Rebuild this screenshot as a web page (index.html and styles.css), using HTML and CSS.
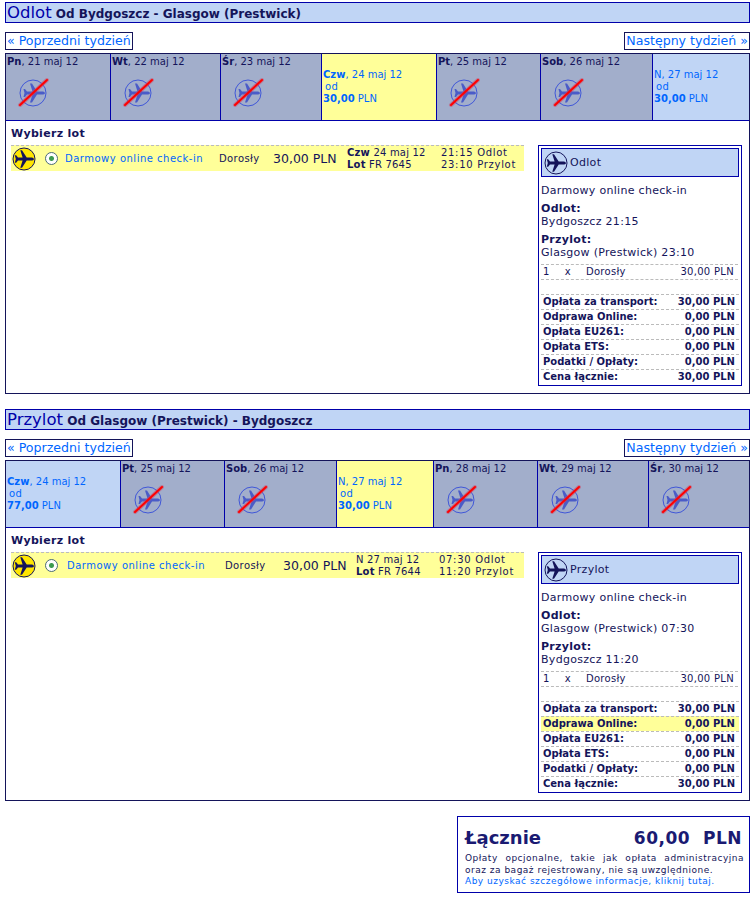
FILE: index.html
```html
<!DOCTYPE html>
<html lang="pl">
  <head>
    <meta charset="UTF-8" />
    <title>Wybierz lot</title>
    <link rel="stylesheet" href="styles.css">
  </head>
  <body>
    <svg class="defs" width="0" height="0">
      <symbol id="plane" viewBox="0 0 24 24">
        <path d="M22 12c0-1-1.500-1.600-3-1.600h-4.300L10 3.200H8.300l2.300 7.200H6L4.200 8.300H2.800l1 3.700-1 3.700h1.400L6 13.600h4.600l-2.300 7.200H10l4.700-7.200H19c1.500 0 3-.6 3-1.600z" />
      </symbol>
      <symbol id="noflight" viewBox="0 0 32 32">
        <circle cx="16" cy="16" r="13" fill="none" stroke="#4057d8" stroke-width="1" />
        <path fill="#4a5cc8" d="M28 16c0-1-1.500-1.600-3-1.600h-5l-5-8h-2l2.500 8H10L8 12H6.500l1 4-1 4H8l2-2.400h5.500l-2.500 8h2l5-8h5c1.500 0 3-.6 3-1.600z" />
        <path class="noflight-glow" d="M3 28 30 3" />
        <path class="noflight-line" d="M3 28 30 3" />
      </symbol>
    </svg>

    <div class="section">
      <h2 class="title"><span class="title-big">Odlot</span> Od Bydgoszcz - Glasgow (Prestwick)</h2>
      <div class="week-nav">
        <a class="week-link">« Poprzedni tydzień</a>
        <a class="week-link">Następny tydzień »</a>
      </div>
      <div class="panel">
        <div class="week week-out">
          <div class="day day-off"><p><b>Pn</b>, 21 maj 12</p><svg class="noflight"><use href="#noflight" /></svg></div>
          <div class="day day-off"><p><b>Wt</b>, 22 maj 12</p><svg class="noflight"><use href="#noflight" /></svg></div>
          <div class="day day-off"><p><b>Śr</b>, 23 maj 12</p><svg class="noflight"><use href="#noflight" /></svg></div>
          <div class="day day-sel"><p><b>Czw</b>, 24 maj 12</p><p class="day-from">od</p><p><b>30,00</b> PLN</p></div>
          <div class="day day-off"><p><b>Pt</b>, 25 maj 12</p><svg class="noflight"><use href="#noflight" /></svg></div>
          <div class="day day-off"><p><b>Sob</b>, 26 maj 12</p><svg class="noflight"><use href="#noflight" /></svg></div>
          <div class="day day-free"><p>N, 27 maj 12</p><p class="day-from">od</p><p><b>30,00</b> PLN</p></div>
        </div>
        <div class="panel-body">
          <div class="flights">
            <h3 class="pick">Wybierz lot</h3>
            <div class="fare fare-out">
              <svg class="badge" viewBox="0 0 24 24"><circle cx="12" cy="12" r="11" fill="#ffe600" stroke="#14145a" stroke-width="1" /><use href="#plane" fill="#14145a" /></svg>
              <span class="radio"></span>
              <span class="fare-name">Darmowy online check-in</span>
              <span class="fare-pax">Dorosły</span>
              <span class="fare-price">30,00 PLN</span>
              <span class="fare-info"><b>Czw</b> 24 maj 12<br><b>Lot</b> FR 7645</span>
              <span class="fare-time">21:15 Odlot<br>23:10 Przylot</span>
            </div>
          </div>
          <div class="summary">
            <div class="summary-head"><svg class="badge" viewBox="0 0 24 24"><circle cx="12" cy="12" r="11" fill="none" stroke="#14145a" stroke-width="1" /><use href="#plane" fill="#14145a" /></svg>Odlot</div>
            <p class="summary-fare">Darmowy online check-in</p>
            <p class="summary-stop"><b>Odlot:</b><br>Bydgoszcz 21:15</p>
            <p class="summary-stop"><b>Przylot:</b><br>Glasgow (Prestwick) 23:10</p>
            <div class="pax"><span>1</span><span>x</span><span>Dorosły</span><span class="pax-price">30,00 PLN</span></div>
            <div class="costs">
              <div class="cost"><span>Opłata za transport:</span><span>30,00 PLN</span></div>
              <div class="cost"><span>Odprawa Online:</span><span>0,00 PLN</span></div>
              <div class="cost"><span>Opłata EU261:</span><span>0,00 PLN</span></div>
              <div class="cost"><span>Opłata ETS:</span><span>0,00 PLN</span></div>
              <div class="cost"><span>Podatki / Opłaty:</span><span>0,00 PLN</span></div>
              <div class="cost"><span>Cena łącznie:</span><span>30,00 PLN</span></div>
            </div>
          </div>
        </div>
      </div>
    </div>

    <div class="section">
      <h2 class="title"><span class="title-big">Przylot</span> Od Glasgow (Prestwick) - Bydgoszcz</h2>
      <div class="week-nav">
        <a class="week-link">« Poprzedni tydzień</a>
        <a class="week-link">Następny tydzień »</a>
      </div>
      <div class="panel">
        <div class="week week-back">
          <div class="day day-free"><p><b>Czw</b>, 24 maj 12</p><p class="day-from">od</p><p><b>77,00</b> PLN</p></div>
          <div class="day day-off"><p><b>Pt</b>, 25 maj 12</p><svg class="noflight"><use href="#noflight" /></svg></div>
          <div class="day day-off"><p><b>Sob</b>, 26 maj 12</p><svg class="noflight"><use href="#noflight" /></svg></div>
          <div class="day day-sel"><p>N, 27 maj 12</p><p class="day-from">od</p><p><b>30,00</b> PLN</p></div>
          <div class="day day-off"><p><b>Pn</b>, 28 maj 12</p><svg class="noflight"><use href="#noflight" /></svg></div>
          <div class="day day-off"><p><b>Wt</b>, 29 maj 12</p><svg class="noflight"><use href="#noflight" /></svg></div>
          <div class="day day-off"><p><b>Śr</b>, 30 maj 12</p><svg class="noflight"><use href="#noflight" /></svg></div>
        </div>
        <div class="panel-body">
          <div class="flights">
            <h3 class="pick">Wybierz lot</h3>
            <div class="fare fare-back">
              <svg class="badge" viewBox="0 0 24 24"><circle cx="12" cy="12" r="11" fill="#ffe600" stroke="#14145a" stroke-width="1" /><use href="#plane" fill="#14145a" /></svg>
              <span class="radio"></span>
              <span class="fare-name">Darmowy online check-in</span>
              <span class="fare-pax">Dorosły</span>
              <span class="fare-price">30,00 PLN</span>
              <span class="fare-info">N 27 maj 12<br><b>Lot</b> FR 7644</span>
              <span class="fare-time">07:30 Odlot<br>11:20 Przylot</span>
            </div>
          </div>
          <div class="summary">
            <div class="summary-head"><svg class="badge" viewBox="0 0 24 24"><circle cx="12" cy="12" r="11" fill="none" stroke="#14145a" stroke-width="1" /><use href="#plane" fill="#14145a" /></svg>Przylot</div>
            <p class="summary-fare">Darmowy online check-in</p>
            <p class="summary-stop"><b>Odlot:</b><br>Glasgow (Prestwick) 07:30</p>
            <p class="summary-stop"><b>Przylot:</b><br>Bydgoszcz 11:20</p>
            <div class="pax"><span>1</span><span>x</span><span>Dorosły</span><span class="pax-price">30,00 PLN</span></div>
            <div class="costs">
              <div class="cost"><span>Opłata za transport:</span><span>30,00 PLN</span></div>
              <div class="cost cost-hi"><span>Odprawa Online:</span><span>0,00 PLN</span></div>
              <div class="cost"><span>Opłata EU261:</span><span>0,00 PLN</span></div>
              <div class="cost"><span>Opłata ETS:</span><span>0,00 PLN</span></div>
              <div class="cost"><span>Podatki / Opłaty:</span><span>0,00 PLN</span></div>
              <div class="cost"><span>Cena łącznie:</span><span>30,00 PLN</span></div>
            </div>
          </div>
        </div>
      </div>
    </div>

    <div class="total">
      <div class="total-head"><span>Łącznie</span><span class="total-sum">60,00&nbsp; PLN</span></div>
      <p class="total-note">Opłaty opcjonalne, takie jak opłata administracyjna oraz za bagaż rejestrowany, nie są uwzględnione.</p>
      <a class="total-link">Aby uzyskać szczegółowe informacje, kliknij tutaj.</a>
    </div>
  </body>
</html>
```

FILE: styles.css
```css
body {
  font-family: "DejaVu Sans", Verdana, sans-serif;
  font-size: 10px;
  line-height: 12px;
  color: #14145a;
  margin: 0;
  padding: 2px 3px 0 5px;
  background-color: #fff;
}
p,
h2,
h3 {
  margin: 0;
}
.defs {
  position: absolute;
}
.section {
  margin-bottom: 15px;
}
.title {
  height: 19px;
  border: 1px solid #0000aa;
  background-color: #c0d5f5;
  font-size: 12px;
  line-height: 19px;
  font-weight: bold;
  padding-left: 1px;
  white-space: nowrap;
}
.title-big {
  font-size: 16.5px;
  font-weight: normal;
  color: #0000aa;
}
.week-nav {
  display: flex;
  justify-content: space-between;
  margin: 9px 0 3px;
}
.week-link {
  border: 1px solid #14145a;
  color: #0066ff;
  font-size: 12.6px;
  line-height: 16px;
  height: 16px;
  padding: 0 1px;
}
.panel {
  border: 1px solid #14145a;
}
.week {
  display: grid;
  height: 66px;
  border-bottom: 1px solid #0000aa;
}
.week-out {
  grid-template-columns: 105px 110px 101px 115px 104px 112px 1fr;
}
.week-back {
  grid-template-columns: 115px 104px 112px 97px 104px 111px 1fr;
}
.day {
  border-right: 1px solid #0000aa;
  padding: 2px 0 0 1px;
  white-space: nowrap;
}
.day:last-child {
  border-right: 0;
}
.day-off {
  background-color: #a2aecb;
}
.day-off svg {
  display: block;
  margin: 9px 0 0 10px;
}
.day-sel,
.day-free {
  color: #0066ff;
  padding-top: 15px;
}
.day-sel {
  background-color: #ffff99;
}
.day-free {
  background-color: #c0d5f5;
}
.day-from {
  padding-left: 2px;
  letter-spacing: 0.5px;
}
.noflight {
  width: 32px;
  height: 32px;
}
.noflight-line {
  stroke: #ff0000;
  stroke-width: 2;
  stroke-linecap: round;
}
.noflight-glow {
  stroke: #d04060;
  stroke-opacity: 0.5;
  stroke-width: 4;
  stroke-linecap: round;
}
.panel-body {
  display: flex;
  justify-content: space-between;
  padding: 6px 7px 7px 5px;
}
.flights {
  width: 513px;
}
.pick {
  font-size: 11px;
  line-height: 13px;
  letter-spacing: 0.3px;
  margin-bottom: 5px;
}
.fare {
  display: grid;
  align-items: center;
  height: 25px;
  border-top: 1px dashed #bbb;
  background-color: #ffff99;
  white-space: nowrap;
}
.fare-out {
  grid-template-columns: 34px 20px 154px 54px 74px 94px 1fr;
}
.fare-back {
  grid-template-columns: 34px 22px 158px 58px 73px 83px 1fr;
}
.badge {
  width: 24px;
  height: 24px;
}
.fare .badge {
  margin-left: 1px;
}
.radio {
  width: 13px;
  height: 13px;
  box-sizing: border-box;
  border: 1px solid #4b6b7b;
  border-radius: 50%;
  background: radial-gradient(circle, #3c9a50 0 2px, #fff 3px);
}
.fare-name {
  color: #0066ff;
  letter-spacing: 0.5px;
}
.fare-pax {
  letter-spacing: 0.4px;
}
.fare-price {
  font-size: 12.5px;
}
.fare-info {
  letter-spacing: 0.2px;
}
.fare-time {
  letter-spacing: 0.7px;
}
.summary {
  width: 198px;
  height: 235px;
  border: 1px solid #0000aa;
  margin-top: 18px;
  padding: 2px;
  font-size: 11px;
  letter-spacing: 0.3px;
}
.summary-head {
  display: flex;
  align-items: center;
  gap: 2px;
  height: 27px;
  border: 1px solid #0000aa;
  background-color: #c0d5f5;
  padding-left: 2px;
}
.summary-fare {
  margin: 7px 0 5px;
  line-height: 13px;
}
.summary-stop {
  margin-bottom: 5px;
  line-height: 13px;
}
.pax {
  display: flex;
  height: 14px;
  border-top: 1px dashed #bbb;
  border-bottom: 1px dashed #bbb;
  padding: 0 4px 0 2px;
  margin-right: 1px;
  font-size: 10px;
  line-height: 14px;
}
.pax span:nth-child(2) {
  margin-left: 15px;
}
.pax span:nth-child(3) {
  margin-left: 15px;
}
.pax-price {
  margin-left: auto;
}
.costs {
  margin-top: 14px;
}
.cost {
  display: flex;
  justify-content: space-between;
  height: 14px;
  border-top: 1px dashed #bbb;
  font-size: 10px;
  letter-spacing: 0;
  font-weight: bold;
  padding: 0 4px 0 2px;
  line-height: 14px;
}
.cost-hi {
  background-color: #ffff99;
}
.total {
  width: 279px;
  height: 69px;
  margin-left: auto;
  border: 1px solid #0000aa;
  padding: 3px 5px 3px 7px;
}
.total-head {
  display: flex;
  justify-content: space-between;
  font-size: 18px;
  line-height: 24px;
  font-weight: bold;
  color: #1a1a72;
  padding: 6px 2px 2px 0;
}
.total-sum {
  font-size: 17px;
  letter-spacing: 0.5px;
}
.total-note {
  font-size: 9px;
  letter-spacing: 0.5px;
  text-align: justify;
}
.total-link {
  display: block;
  margin-top: -1px;
  font-size: 9px;
  letter-spacing: 0.5px;
  color: #0066ff;
}
```
